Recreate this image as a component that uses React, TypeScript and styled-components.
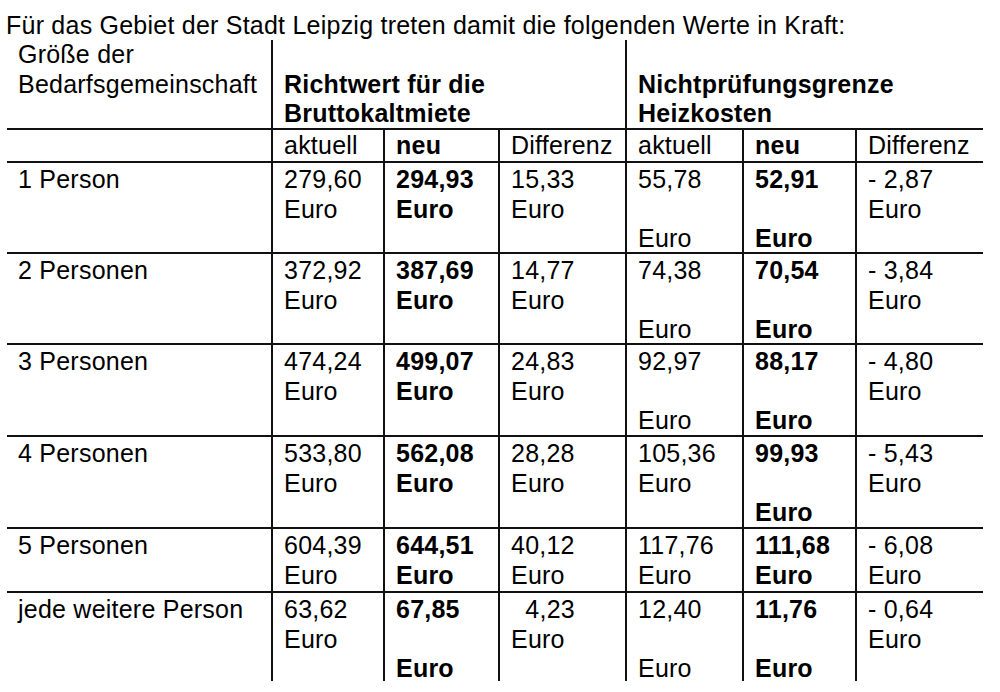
import React from "react";
import styled, { createGlobalStyle } from "styled-components";

const GlobalStyle = createGlobalStyle`
  html, body {
    margin: 0;
    padding: 0;
    background: #ffffff;
  }
  body {
    font-family: "Liberation Sans", Arial, sans-serif;
    color: #000;
  }
`;

const Page = styled.div`
  width: 1000px;
  height: 692px;
  box-sizing: border-box;
  padding: 11px 0 0 7px;
  overflow: hidden;
  font-family: "Liberation Sans", Arial, sans-serif;
  font-size: 25px;
  letter-spacing: 0.23px;
  color: #000;
`;

const Title = styled.div`
  margin-left: -1px;
  line-height: 29px;
  height: 29px;
  white-space: nowrap;
`;

const Grid = styled.div`
  display: grid;
  width: 976px;
  grid-template-columns: 264px 112px 115px 127px 117px 113px 128px;
  grid-template-rows: 88px 33px 91px 91px 92px 92px 64px 90px;
`;

const Cell = styled.div<{ $first?: boolean; $top?: boolean; $bold?: boolean; $span?: number; $pad?: number }>`
  box-sizing: border-box;
  grid-column: span ${(p) => p.$span ?? 1};
  padding-left: 11px;
  padding-top: ${(p) => p.$pad ?? 2}px;
  border-left: ${(p) => (p.$first ? "none" : "2px solid #111")};
  border-top: ${(p) => (p.$top ? "2px solid #111" : "none")};
  font-weight: ${(p) => (p.$bold ? 700 : 400)};
  line-height: 29.5px;
  white-space: pre;
`;

type Row = { label: string; cells: string[] };

const rows: Row[] = [
  {
    label: "1 Person",
    cells: ["279,60\nEuro", "294,93\nEuro", "15,33\nEuro", "55,78\n\nEuro", "52,91\n\nEuro", "- 2,87\nEuro"],
  },
  {
    label: "2 Personen",
    cells: ["372,92\nEuro", "387,69\nEuro", "14,77\nEuro", "74,38\n\nEuro", "70,54\n\nEuro", "- 3,84\nEuro"],
  },
  {
    label: "3 Personen",
    cells: ["474,24\nEuro", "499,07\nEuro", "24,83\nEuro", "92,97\n\nEuro", "88,17\n\nEuro", "- 4,80\nEuro"],
  },
  {
    label: "4 Personen",
    cells: ["533,80\nEuro", "562,08\nEuro", "28,28\nEuro", "105,36\nEuro", "99,93\n\nEuro", "- 5,43\nEuro"],
  },
  {
    label: "5 Personen",
    cells: ["604,39\nEuro", "644,51\nEuro", "40,12\nEuro", "117,76\nEuro", "111,68\nEuro", "- 6,08\nEuro"],
  },
  {
    label: "jede weitere Person",
    cells: ["63,62\nEuro", "67,85\n\nEuro", "  4,23\nEuro", "12,40\n\nEuro", "11,76\n\nEuro", "- 0,64\nEuro"],
  },
];

const subHeads = ["aktuell", "neu", "Differenz", "aktuell", "neu", "Differenz"];
const boldCol = (i: number) => i === 1 || i === 4;

export default function App() {
  return (
    <>
      <GlobalStyle />
      <Page>
        <Title>Für das Gebiet der Stadt Leipzig treten damit die folgenden Werte in Kraft:</Title>
        <Grid>
          <Cell $first $pad={0}>{"Größe der\nBedarfsgemeinschaft"}</Cell>
          <Cell $span={3} $bold $pad={0}>{"\nRichtwert für die\nBruttokaltmiete"}</Cell>
          <Cell $span={3} $bold $pad={0}>{"\nNichtprüfungsgrenze\nHeizkosten"}</Cell>

          <Cell $first $top $pad={1} />
          {subHeads.map((h, i) => (
            <Cell key={"h" + i} $top $bold={boldCol(i)} $pad={1}>
              {h}
            </Cell>
          ))}

          {rows.map((r) => (
            <React.Fragment key={r.label}>
              <Cell $first $top>{r.label}</Cell>
              {r.cells.map((c, i) => (
                <Cell key={r.label + i} $top $bold={boldCol(i)}>
                  {c}
                </Cell>
              ))}
            </React.Fragment>
          ))}
        </Grid>
      </Page>
    </>
  );
}
